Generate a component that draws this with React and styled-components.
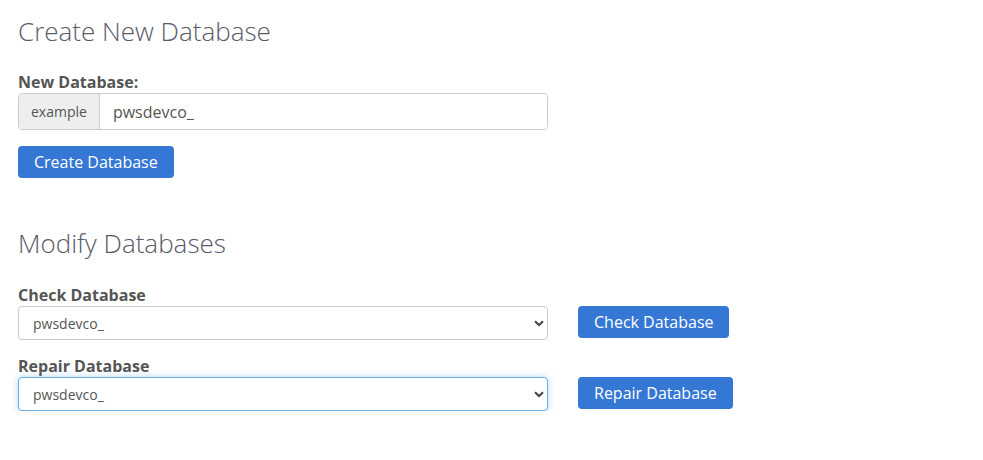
import React from 'react'
import styled, { createGlobalStyle } from 'styled-components'

const GlobalStyle = createGlobalStyle`
  body {
    margin: 0;
    background: #fff;
    font-family: "Open Sans", "Liberation Sans", sans-serif;
    color: #555;
  }
`

const Page = styled.div`
  padding: 14px 18px 0 18px;
`

const Heading = styled.h2`
  margin: 0 0 ${p => p.gap || 26}px 0;
  font-size: 26px;
  font-weight: 300;
  line-height: 34px;
  color: #5a5a68;
`

const Label = styled.label`
  display: block;
  font-size: 16px;
  font-weight: 700;
  line-height: 20px;
  color: #555;
  margin-bottom: 1px;
`

const InputGroup = styled.div`
  display: flex;
  width: 530px;
  height: 37px;
  border: 1px solid #ccc;
  border-radius: 4px;
  box-sizing: border-box;
  overflow: hidden;
  margin-bottom: 16px;
`

const Addon = styled.span`
  display: flex;
  align-items: center;
  padding: 0 12px;
  background: #eee;
  border-right: 1px solid #ccc;
  font-size: 14px;
  color: #555;
`

const TextInput = styled.input`
  flex: 1;
  border: 0;
  outline: none;
  padding: 0 13px;
  font-family: inherit;
  font-size: 16px;
  color: #555;
`

const Button = styled.button`
  height: 32px;
  padding: 0 16px;
  border: 0;
  border-radius: 4px;
  background: #3577d4;
  color: #fff;
  font-family: inherit;
  font-size: 16px;
  cursor: pointer;
`

const Section = styled.div`
  margin-bottom: ${p => p.gap || 0}px;
`

const Row = styled.div`
  display: flex;
  align-items: flex-start;
  gap: 30px;
  margin-bottom: ${p => p.gap || 0}px;
`

const SelectBox = styled.div`
  position: relative;
  width: 530px;
`

const Select = styled.select`
  width: 100%;
  height: 34px;
  box-sizing: border-box;
  appearance: none;
  padding: 0 14px;
  border: 1px solid ${p => (p.focused ? '#66afe9' : '#ccc')};
  border-radius: 4px;
  background: #fff;
  font-family: inherit;
  font-size: 14px;
  color: #555;
  outline: none;
  box-shadow: ${p => (p.focused ? '0 0 6px rgba(102,175,233,0.5)' : 'none')};
`

const Chevron = styled.svg`
  position: absolute;
  right: 4px;
  top: 14px;
  pointer-events: none;
`

function DbSelect({ focused }) {
  return (
    <SelectBox>
      <Select focused={focused} defaultValue="pwsdevco_">
        <option>pwsdevco_</option>
      </Select>
      <Chevron width="10" height="7" viewBox="0 0 10 7">
        <path d="M1 1.2 L5 5 L9 1.2" fill="none" stroke="#444" strokeWidth="2" />
      </Chevron>
    </SelectBox>
  )
}

function App() {
  return (
    <>
      <GlobalStyle />
      <Page>
        <Heading gap={24}>Create New Database</Heading>
        <Label>New Database:</Label>
        <InputGroup>
          <Addon>example</Addon>
          <TextInput defaultValue="pwsdevco_" />
        </InputGroup>
        <Section gap={48}>
          <Button>Create Database</Button>
        </Section>
        <Heading gap={25}>Modify Databases</Heading>
        <Label>Check Database</Label>
        <Row gap={16}>
          <DbSelect />
          <Button>Check Database</Button>
        </Row>
        <Label>Repair Database</Label>
        <Row>
          <DbSelect focused />
          <Button>Repair Database</Button>
        </Row>
      </Page>
    </>
  )
}

export default App
